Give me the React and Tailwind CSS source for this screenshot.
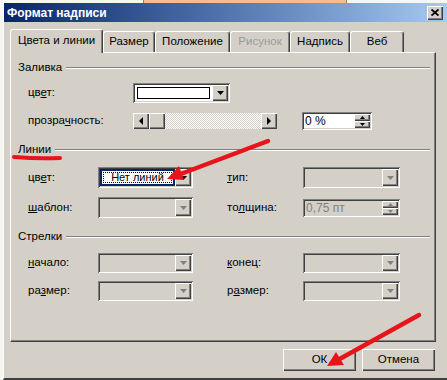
import React from 'react';

const RAISED = 'shadow-[inset_1px_1px_#ffffff,inset_-1px_-1px_#404040,inset_-2px_-2px_#808080]';
const SUNKEN = 'shadow-[inset_1px_1px_#808080,inset_-1px_-1px_#ffffff,inset_2px_2px_#404040,inset_-2px_-2px_#d4d0c8]';

const Tri = ({ dir = 'down', disabled, small }) => {
  const c = disabled ? '#808080' : '#000000';
  if (dir === 'left' || dir === 'right') {
    const pts = dir === 'left' ? '4,0 4,8 0,4' : '0,0 0,8 4,4';
    return (
      <svg width="4" height="8" viewBox="0 0 4 8">
        <polygon points={pts} fill={c} />
      </svg>
    );
  }
  const w = small ? 5 : 7;
  const h = small ? 3 : 4;
  const pts = dir === 'up' ? `0,${h} ${w},${h} ${w / 2},0` : `0,0 ${w},0 ${w / 2},${h}`;
  return (
    <svg width={w} height={h} viewBox={`0 0 ${w} ${h}`}>
      <polygon points={pts} fill={c} />
    </svg>
  );
};

const Combo = ({ className = '', disabled, children }) => (
  <div className={`flex h-full p-[2px] ${SUNKEN} ${disabled ? 'bg-[#d4d0c8]' : 'bg-white'} ${className}`}>
    <div className="flex-1 flex min-w-0">{children}</div>
    <div className={`w-[16px] flex items-center justify-center bg-[#d4d0c8] ${RAISED}`}>
      <Tri dir="down" disabled={disabled} />
    </div>
  </div>
);

const Spin = ({ className = '', text, disabled }) => (
  <div className={`flex h-[18px] p-[2px] ${SUNKEN} ${disabled ? 'bg-[#d4d0c8] text-[#808080]' : 'bg-white'} ${className}`}>
    <div className="flex-1 flex items-center pl-[1px] text-[12px]">{text}</div>
    <div className="w-[16px] flex flex-col">
      <div className={`flex-1 flex items-center justify-center bg-[#d4d0c8] ${RAISED}`}>
        <Tri dir="up" small disabled={disabled} />
      </div>
      <div className={`flex-1 flex items-center justify-center bg-[#d4d0c8] ${RAISED}`}>
        <Tri dir="down" small disabled={disabled} />
      </div>
    </div>
  </div>
);

const Group = ({ title }) => (
  <div className="flex items-center h-[14px] pl-[7px] pr-[5px]">
    <span>{title}</span>
    <div className="flex-1 ml-[4px] h-[2px] border-t border-b border-t-[#808080] border-b-white" />
  </div>
);

const Tab = ({ active, disabled, className = '', children }) => (
  <div
    className={`flex items-center justify-center rounded-t-[3px] border-t border-l border-white border-r border-r-[#404040] bg-[#d4d0c8] shadow-[inset_-1px_0_#808080] ${
      active ? 'h-[24px] pb-[2px] relative z-10' : 'h-[21px] mb-[1px]'
    } ${disabled ? 'text-[#9a9a9a]' : ''} ${className}`}
  >
    {children}
  </div>
);

export default function App() {
  return (
    <div className="relative w-[447px] h-[380px] bg-[#f6f6f2] flex flex-col overflow-hidden text-[11.5px] text-black font-['Liberation_Sans',Arial,sans-serif]">
      <div className="h-[3px] flex shrink-0">
        <div className="w-[143px]" />
        <div className="w-[204px] bg-[#f2bf8c] border-x border-[#9a7a5a]" />
      </div>

      <div className="flex-1 ml-[3px] flex flex-col bg-[#d4d0c8] border-l border-white border-b-2 border-b-[#404040]">
        <div className="h-[19px] shrink-0 flex items-center bg-linear-to-r from-[#0a246a] to-[#a6caf0] pl-[3px] pr-[4px]">
          <span className="flex-1 text-white font-bold text-[12px]">Формат надписи</span>
          <div className={`w-[16px] h-[14px] flex items-center justify-center bg-[#d4d0c8] ${RAISED}`}>
            <svg width="8" height="7" viewBox="0 0 8 7">
              <path d="M0.5 0.5 L7.5 6.5 M7.5 0.5 L0.5 6.5" stroke="#000" strokeWidth="1.8" />
            </svg>
          </div>
        </div>

        <div className="mt-[7px] h-[24px] -mb-px flex items-end pl-[6px] shrink-0">
          <Tab active className="w-[93px]">Цвета и линии</Tab>
          <Tab className="w-[52px]">Размер</Tab>
          <Tab className="w-[75px]">Положение</Tab>
          <Tab disabled className="w-[60px]">Рисунок</Tab>
          <Tab className="w-[60px]">Надпись</Tab>
          <Tab className="w-[54px]">Веб</Tab>
        </div>

        <div className="ml-[6px] w-[426px] h-[290px] shrink-0 flex flex-col pt-[8px] border-t border-l border-white border-r border-b border-r-[#404040] border-b-[#404040] shadow-[inset_-1px_-1px_#808080]">
          <Group title="Заливка" />
          <div className="mt-[8px] h-[20px] flex items-center pl-[17px]">
            <div className="w-[105px]">цв<u>е</u>т:</div>
            <Combo className="w-[97px]">
              <div className="flex-1 m-[2px] bg-white border border-black" />
            </Combo>
          </div>
          <div className="mt-[8px] h-[20px] flex items-center pl-[17px]">
            <div className="w-[105px]">прозра<u>ч</u>ность:</div>
            <div className="w-[144px] h-[16px] flex">
              <div className={`w-[16px] flex items-center justify-center bg-[#d4d0c8] ${RAISED}`}>
                <Tri dir="left" />
              </div>
              <div className={`w-[16px] bg-[#d4d0c8] ${RAISED}`} />
              <div className="flex-1 bg-[repeating-conic-gradient(#ffffff_0%_25%,#d4d0c8_0%_50%)] bg-[length:2px_2px]" />
              <div className={`w-[16px] flex items-center justify-center bg-[#d4d0c8] ${RAISED}`}>
                <Tri dir="right" />
              </div>
            </div>
            <div className="w-[25px]" />
            <Spin className="w-[70px]" text="0 %" />
          </div>

          <div className="mt-[12px]">
            <Group title="Линии" />
          </div>
          <div className="mt-[10px] h-[21px] flex items-center pl-[17px]">
            <div className="w-[70px]">цв<u>е</u>т:</div>
            <Combo className="w-[95px]">
              <div className="flex-1 border-2 border-[#0a246a] bg-white p-[1px] flex">
                <div className="flex-1 flex items-center justify-center border border-dotted border-black text-[11px]">Нет линий</div>
              </div>
            </Combo>
            <div className="w-[34px]" />
            <div className="w-[76px]"><u>т</u>ип:</div>
            <Combo disabled className="w-[97px]" />
          </div>
          <div className="mt-[9px] h-[21px] flex items-center pl-[17px]">
            <div className="w-[70px]"><u>ш</u>аблон:</div>
            <Combo disabled className="w-[95px]" />
            <div className="w-[34px]" />
            <div className="w-[76px]">то<u>л</u>щина:</div>
            <Spin disabled className="w-[97px]" text="0,75 пт" />
          </div>

          <div className="mt-[12px]">
            <Group title="Стрелки" />
          </div>
          <div className="mt-[9px] h-[20px] flex items-center pl-[17px]">
            <div className="w-[70px]"><u>н</u>ачало:</div>
            <Combo disabled className="w-[95px]" />
            <div className="w-[34px]" />
            <div className="w-[76px]"><u>к</u>онец:</div>
            <Combo disabled className="w-[97px]" />
          </div>
          <div className="mt-[8px] h-[20px] flex items-center pl-[17px]">
            <div className="w-[70px]">ра<u>з</u>мер:</div>
            <Combo disabled className="w-[95px]" />
            <div className="w-[34px]" />
            <div className="w-[76px]">р<u>а</u>змер:</div>
            <Combo disabled className="w-[97px]" />
          </div>
        </div>

        <div className="mt-[7px] h-[22px] shrink-0 flex justify-end gap-[6px] pr-[12px]">
          <div className={`w-[73px] flex items-center justify-center bg-[#d4d0c8] ${RAISED}`}>ОК</div>
          <div className={`w-[73px] flex items-center justify-center bg-[#d4d0c8] ${RAISED}`}>Отмена</div>
        </div>
      </div>

      <svg className="absolute inset-0 pointer-events-none" width="447" height="380" viewBox="0 0 447 380">
        <g stroke="#e8141a" strokeLinecap="round" fill="none">
          <path d="M13 48 Q 55 51 101 49" strokeWidth="3.5" />
          <path d="M14 157 Q 38 159 60 158" strokeWidth="4" />
          <path d="M268 141 L178 175" strokeWidth="4.5" />
          <path d="M419 315 L336 361" strokeWidth="4.5" />
        </g>
        <g fill="#e8141a">
          <polygon points="167,179 179,166 184,180" />
          <polygon points="327,366 336,352 344,365" />
        </g>
      </svg>
    </div>
  );
}
